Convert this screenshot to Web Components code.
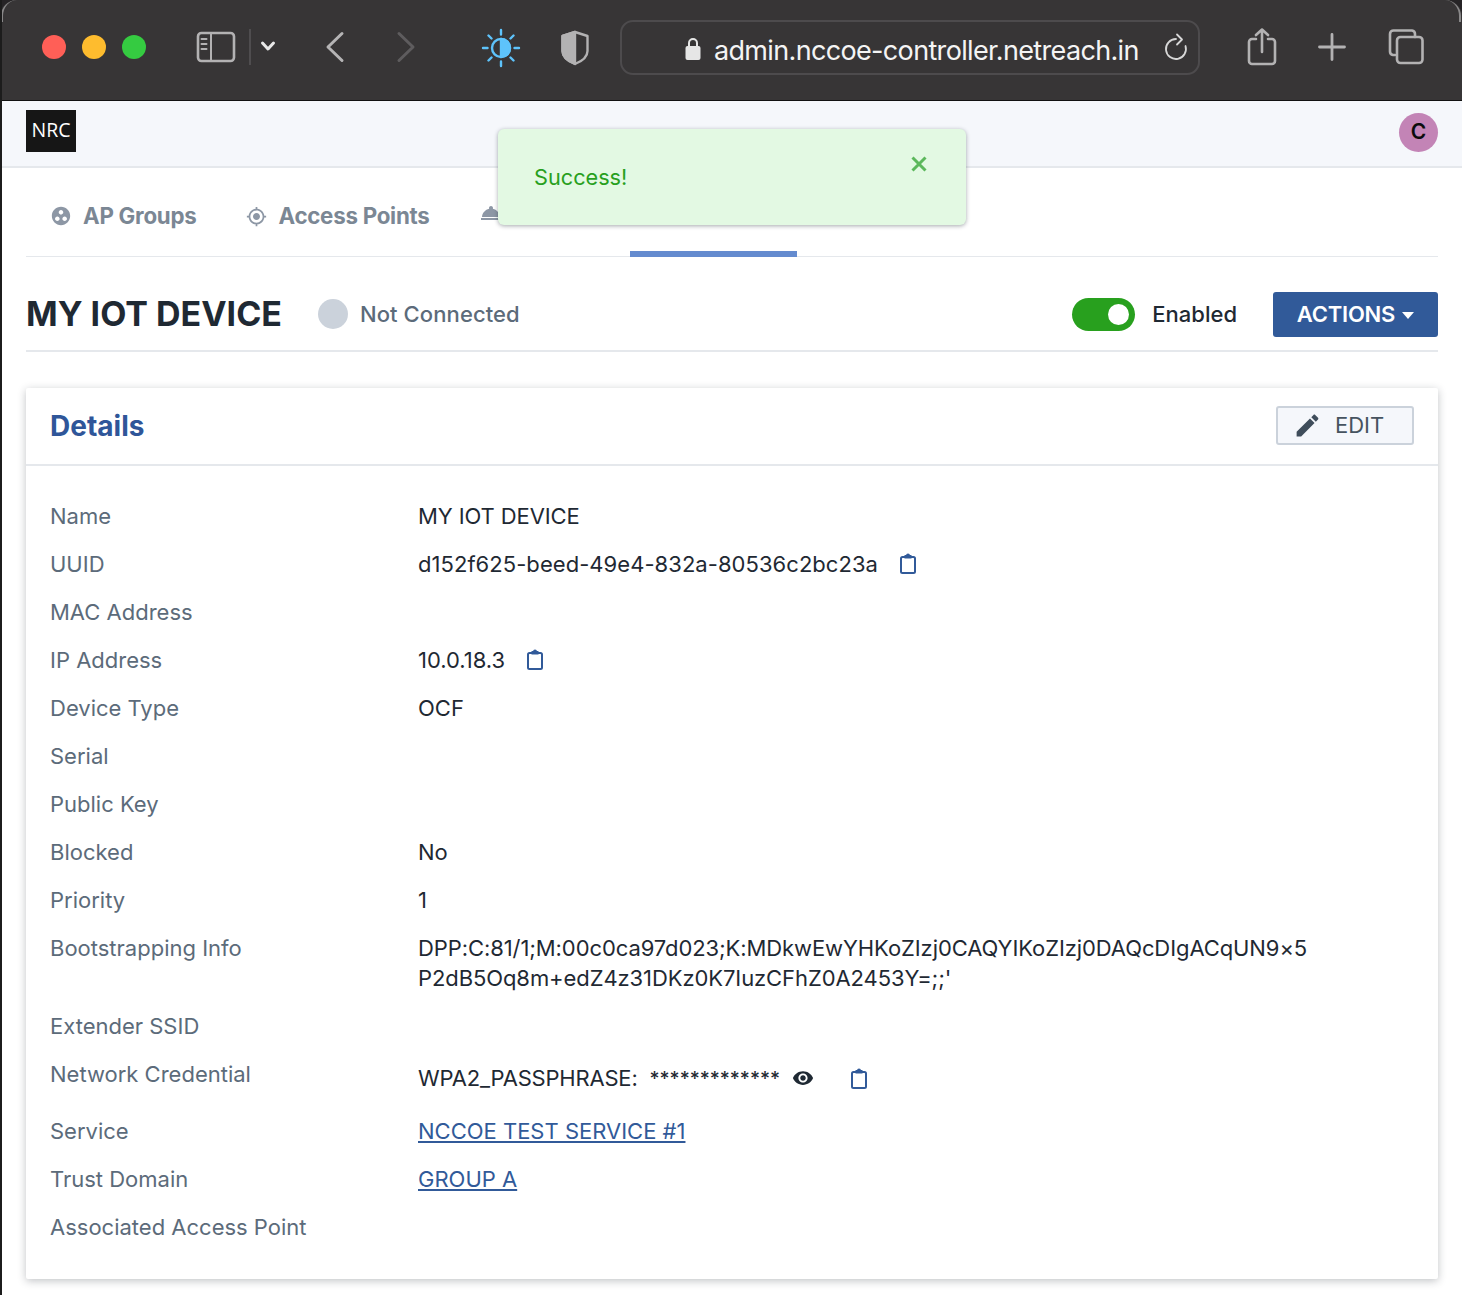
<!DOCTYPE html>
<html><head><meta charset="utf-8"><style>
html,body{margin:0;padding:0;background:#fff;height:1295px;overflow:hidden}
body{font-family:Inter,"Noto Sans",sans-serif;color:#1f2933}
</style></head><body>
<app-window>
<safari-bar></safari-bar>
<app-header></app-header>
<page-main>
<nav-tabs></nav-tabs>
<device-title name="MY IOT DEVICE"></device-title>
<details-card>
<detail-row label="Name"><span style="letter-spacing:-.1px">MY IOT DEVICE</span></detail-row>
<detail-row label="UUID"><span style="letter-spacing:.05px">d152f625-beed-49e4-832a-80536c2bc23a</span><copy-icon style="margin-left:21px"></copy-icon></detail-row>
<detail-row label="MAC Address"></detail-row>
<detail-row label="IP Address"><span>10.0.18.3</span><copy-icon style="margin-left:21px"></copy-icon></detail-row>
<detail-row label="Device Type">OCF</detail-row>
<detail-row label="Serial"></detail-row>
<detail-row label="Public Key"></detail-row>
<detail-row label="Blocked">No</detail-row>
<detail-row label="Priority">1</detail-row>
<detail-row label="Bootstrapping Info"><span style="letter-spacing:-.09px">DPP:C:81/1;M:00c0ca97d023;K:MDkwEwYHKoZIzj0CAQYIKoZIzj0DAQcDIgACqUN9×5<br>P2dB5Oq8m+edZ4z31DKz0K7IuzCFhZ0A2453Y=;;'</span></detail-row>
<detail-row label="Extender SSID"></detail-row>
<detail-row label="Network Credential" tall><span style="letter-spacing:-.2px">WPA2_PASSPHRASE:</span><span style="margin-left:12px;font-size:19.300px;font-weight:500">*************</span><eye-icon></eye-icon><copy-icon style="margin-left:36px"></copy-icon></detail-row>
<detail-row label="Service"><a href="#" style="color:#315a99">NCCOE TEST SERVICE #1</a></detail-row>
<detail-row label="Trust Domain"><a href="#" style="color:#315a99">GROUP A</a></detail-row>
<detail-row label="Associated Access Point"></detail-row>
</details-card>
</page-main>
<toast-alert>Success!</toast-alert>
</app-window>
<script>
function def(name,html){
  customElements.define(name,class extends HTMLElement{
    connectedCallback(){
      if(this.shadowRoot)return;
      const s=this.attachShadow({mode:'open'});
      s.innerHTML=typeof html==='function'?html(this):html;
    }
  });
}
def('app-window',`<style>:host{display:block;position:relative;height:1295px;box-sizing:border-box;border-left:2px solid #1c1c1c;overflow:hidden}</style><slot></slot>`);

def('safari-bar',`<style>
:host{display:block;height:101px;margin-left:-2px;background:#262426;position:relative}
.in{display:flex;align-items:center;height:100px;background:#373536;border-bottom:1px solid #111;border-radius:16px 16px 0 0;padding-left:42px}
.rl,.rr{position:absolute;top:0;width:16px;height:22px;box-sizing:border-box}
.rl{left:1px;border-left:2px solid #8a898a;border-top-left-radius:16px}
.rr{right:1px;border-right:2px solid #8a898a;border-top-right-radius:16px}
svg{display:block;flex:none;fill:none;stroke-linecap:round;stroke-linejoin:round}
.d{width:24px;height:24px;border-radius:50%;flex:none;margin-top:-6px}
.url{flex:none;box-sizing:border-box;width:580px;height:55px;margin:-6px 0 0 31px;border:2px solid #4d4b4d;border-radius:13px;display:flex;align-items:center;padding-left:63px;color:#f4f4f4;font:400 27px/1 Inter,sans-serif;white-space:nowrap}
.u{margin-left:13px;letter-spacing:-.66px;margin-top:6px}
</style>
<div class="in">
<div class="d" style="background:#ff5f57"></div>
<div class="d" style="background:#febc2e;margin-left:16px"></div>
<div class="d" style="background:#35cb41;margin-left:16px"></div>
<svg style="margin:-6px 0 0 50px" width="40" height="32" viewBox="0 0 40 32" stroke="#b3b2b3" stroke-width="2.6"><rect x="2" y="2" width="36" height="28" rx="3.5"/><path d="M15 2v28M5.5 8h5M5.5 13h5M5.5 18h5" stroke-width="2"/></svg>
<svg style="margin:-6px 0 0 13px" width="2" height="36" viewBox="0 0 2 36"><rect width="2" height="36" fill="#4f4d4f"/></svg>
<svg style="margin:-8px 0 0 9px" width="16" height="12" viewBox="0 0 16 12" stroke="#e8e8e8" stroke-width="3"><path d="M2.5 3 8 9l5.5-6"/></svg>
<svg style="margin:-6px 0 0 49px" width="20" height="32" viewBox="0 0 20 32" stroke="#b5b4b5" stroke-width="3"><path d="M17 2.5 3 16l14 13.5"/></svg>
<svg style="margin:-6px 0 0 51px" width="20" height="32" viewBox="0 0 20 32" stroke="#5e5c5e" stroke-width="3"><path d="M3 2.5 17 16 3 29.5"/></svg>
<svg style="margin:-4px 0 0 65px" width="40" height="40" viewBox="0 0 40 40" stroke="#5ec3fb" stroke-width="2.4"><circle cx="20" cy="20" r="9"/><path d="M20 11a9 9 0 0 1 0 18z" fill="#5ec3fb"/><path d="M20 2v4.500M20 33.500V38M2 20h4.500M33.500 20H38M7.500 7.500l3 3M29.500 29.500l3 3M7.500 32.500l3-3M29.500 10.500l3-3"/></svg>
<svg style="margin:-4px 0 0 40px" width="28" height="36" viewBox="0 0 28 36" stroke="#b3b2b3" stroke-width="2.400"><path d="M14 2 26.500 6v15c0 6-5 10-12.500 13C6.500 31 1.500 27 1.500 21V6z"/><path d="M14 2 1.500 6v15c0 6 5 10 12.500 13z" fill="#b3b2b3"/></svg>
<div class="url">
<svg width="16" height="23" viewBox="0 0 16 23" style="margin-top:3px"><rect x="0.500" y="9" width="15" height="14" rx="2" fill="#e6e6e6"/><path d="M4 10V6a4 4 0 0 1 8 0v4" stroke="#e6e6e6" stroke-width="2"/></svg>
<span class="u">admin.nccoe-controller.netreach.in</span>
<svg style="margin:-1px 0 0 25px" width="24" height="30" viewBox="0 0 24 30" stroke="#d8d8d8" stroke-width="1.800"><path d="M12 7A10 10 0 1 0 21.500 14"/><path d="M13 2.500 18 7.500 13 12.500"/></svg>
</div>
<svg style="margin:-6px 0 0 47px" width="30" height="38" viewBox="0 0 30 38" stroke="#b3b2b3" stroke-width="2.600"><path d="M9 11H5a3 3 0 0 0-3 3v19a3 3 0 0 0 3 3h20a3 3 0 0 0 3-3V14a3 3 0 0 0-3-3h-4M15 24V1.500M9 7l6-5.500L21 7"/></svg>
<svg style="margin:-6px 0 0 41px" width="28" height="28" viewBox="0 0 28 28" stroke="#b3b2b3" stroke-width="2.800"><path d="M14 1.500v25M1.500 14h25"/></svg>
<svg style="margin:-6px 0 0 42px" width="36" height="36" viewBox="0 0 36 36" stroke="#b3b2b3" stroke-width="2.600"><path d="M7 26H5a3.500 3.500 0 0 1-3-3.500V5a3.500 3.500 0 0 1 3.500-3.500H24A3.500 3.500 0 0 1 27 5v3"/><rect x="9" y="8" width="25.500" height="26" rx="3.500"/></svg>
</div><div class="rl"></div><div class="rr"></div>
`);

def('app-header',`<style>
:host{display:flex;justify-content:space-between;background:#f5f7fb;border-bottom:2px solid #e5e8ec;padding:9px 24px 0 24px;height:56px}
.l{width:50px;height:42px;background:#161616;color:#fff;font:400 19.500px/40px "Open Sans",sans-serif;text-align:center}
.a{width:39px;height:39px;border-radius:50%;background:#c384b6;margin-top:3px;color:#0c0c0c;font:600 21px/38px Inter,sans-serif;text-align:center}
</style><div class="l">NRC</div><div class="a">C</div>`);

def('page-main',`<style>:host{display:block;padding:0 24px}</style><slot></slot>`);

const GW="M12 2C6.480 2 2 6.480 2 12s4.480 10 10 10 10-4.480 10-10S17.520 2 12 2zM8 17.500c-1.380 0-2.500-1.120-2.500-2.500s1.120-2.500 2.500-2.500 2.500 1.120 2.500 2.500-1.120 2.500-2.500 2.500zM9.500 8c0-1.380 1.120-2.500 2.500-2.500s2.500 1.120 2.500 2.500-1.120 2.500-2.500 2.500S9.500 9.380 9.500 8zm6.500 9.500c-1.380 0-2.500-1.120-2.500-2.500s1.120-2.500 2.500-2.500 2.500 1.120 2.500 2.500-1.120 2.500-2.500 2.500z";
const GPS="M12 8c-2.210 0-4 1.790-4 4s1.790 4 4 4 4-1.790 4-4-1.790-4-4-4zm8.940 3c-.46-4.170-3.770-7.480-7.940-7.940V1h-2v2.060C6.830 3.520 3.520 6.830 3.060 11H1v2h2.060c.46 4.170 3.770 7.480 7.940 7.940V23h2v-2.060c4.170-.46 7.480-3.770 7.940-7.940H23v-2h-2.060zM12 19c-3.870 0-7-3.130-7-7s3.130-7 7-7 7 3.130 7 7-3.130 7-7 7z";
const RS="M2 17h20v2H2zm11.840-9.210c.1-.24.16-.51.16-.79 0-1.100-.9-2-2-2s-2 .9-2 2c0 .28.06.55.16.79C6.250 8.600 3.270 11.930 3 16h18c-.27-4.070-3.250-7.400-7.160-8.210z";
def('nav-tabs',`<style>
:host{display:flex;height:88px;border-bottom:1px solid #e5e8ec;padding-left:24px;box-sizing:content-box;align-items:flex-start}
.t{display:flex;align-items:center;color:#7b8794;font:700 22.300px/30px Inter,sans-serif;letter-spacing:-.25px;margin-top:33px;white-space:nowrap}
svg{display:block;fill:#8d97a5;flex:none}
.ind{width:167px;height:6px;background:#648bcf;align-self:flex-end;margin-left:127px;margin-bottom:-1px}
</style>
<div class="t"><svg width="22" height="22" viewBox="0 0 24 24" style="margin-right:11px"><path d="${GW}"/></svg>AP Groups</div>
<div class="t" style="margin-left:49px"><svg width="21" height="21" viewBox="0 0 24 24" style="margin-right:12px"><path d="${GPS}"/></svg>Access Points</div>
<div class="t" style="margin-left:49px"><svg width="24" height="24" viewBox="0 0 24 24"><path d="${RS}"/></svg></div>
<div class="ind"></div>`);

def('device-title',h=>`<style>
:host{display:flex;align-items:center;height:73px;padding-top:20px;border-bottom:2px solid #e5e8ec;box-sizing:content-box}
h1{margin:0;font:700 34px/40px Inter,sans-serif;color:#1f2933;white-space:nowrap}
.c{width:30px;height:30px;border-radius:50%;background:#cbd2db;margin:1px 0 0 36px}
.s{margin-left:12px;color:#5c6b7a;font-size:22px;letter-spacing:.1px;font-weight:500}
.sp{flex:1}
.tg{width:63px;height:33px;border-radius:17px;background:#28a01e;position:relative;margin-top:1px}
.tg b{position:absolute;right:6px;top:6px;width:21px;height:21px;border-radius:50%;background:#fff}
.e{margin-left:17px;font-size:22px;font-weight:500;color:#1f2933}
.b{margin:1px 0 0 36px;width:165px;height:45px;border-radius:3px;background:#315a99;color:#fff;font:600 22px/45px Inter,sans-serif;display:flex;align-items:center;justify-content:center;letter-spacing:-.2px}
.b i{display:block;width:0;height:0;border:6.500px solid transparent;border-top:7px solid #fff;border-bottom:0;margin-left:7px;margin-top:3px}
</style><h1>${h.getAttribute('name')}</h1><div class="c"></div><span class="s">Not Connected</span><div class="sp"></div>
<div class="tg"><b></b></div><span class="e">Enabled</span><div class="b">ACTIONS<i></i></div>`);

def('details-card',`<style>
:host{display:block;margin-top:36px;height:891px;background:#fff;box-shadow:0 2px 8px rgba(31,41,51,.28);border-radius:2px;box-sizing:border-box}
header{display:flex;justify-content:space-between;align-items:center;height:78px;box-sizing:border-box;padding:0 24px;border-bottom:2px solid #e5e8ec}
h2{margin:0;font:700 28px/36px Inter,sans-serif;color:#2f5699}
.ed{margin-top:-2px;width:138px;height:39px;box-sizing:border-box;background:#f5f7fb;border:2px solid #cbd2db;border-radius:3px;display:flex;align-items:center;padding-left:15px;color:#46535f;font:400 22px/1 Inter,sans-serif}
.ed svg{display:block;fill:#3f4d5b;margin-right:13px;flex:none}
.b{padding-top:35px}
</style>
<header><h2>Details</h2><div class="ed"><svg width="29" height="29" viewBox="0 0 24 24"><path d="M3 17.250V21h3.750L17.810 9.940l-3.750-3.750L3 17.250zM20.710 7.040c.39-.39.39-1.020 0-1.410l-2.340-2.340c-.39-.39-1.020-.39-1.410 0l-1.830 1.830 3.750 3.750 1.830-1.830z"/></svg>EDIT</div></header>
<div class="b"><slot></slot></div>`);

def('detail-row',h=>`<style>
:host{display:flex;padding:0 24px 18px;font-size:22px;line-height:30px}
:host([tall]){padding-bottom:23px}
.k{width:368px;flex:none;color:#5c6b7a}
.v{color:#1f2933;display:block;min-height:30px}
:host([tall]) .v{margin-top:4px;display:flex;align-items:center;height:30px}
</style><div class="k">${h.getAttribute('label')}</div><div class="v"><slot></slot></div>`);

def('copy-icon',`<style>:host{display:inline-block;vertical-align:-2px;width:18px;height:21px}svg{display:block;fill:none;stroke:#315a99;stroke-width:2}</style>
<svg width="18" height="21" viewBox="0 0 18 21"><rect x="2" y="4" width="14" height="16" rx="1.500"/><path d="M5.500 2h7v3.500h-7z" fill="#315a99" stroke="none"/><circle cx="9" cy="2.500" r="2" fill="#315a99" stroke="none"/></svg>`);

def('eye-icon',`<style>:host{display:inline-block;width:22px;height:22px;margin-left:12px}svg{display:block;fill:#1f2933}</style>
<svg width="22" height="22" viewBox="0 0 24 24"><path d="M12 4.500C7 4.500 2.730 7.610 1 12c1.730 4.390 6 7.500 11 7.500s9.270-3.110 11-7.500c-1.730-4.390-6-7.500-11-7.500zM12 17c-2.760 0-5-2.240-5-5s2.240-5 5-5 5 2.240 5 5-2.240 5-5 5zm0-8c-1.660 0-3 1.340-3 3s1.340 3 3 3 3-1.340 3-3-1.340-3-3-3z"/></svg>`);

def('toast-alert',`<style>
:host{position:absolute;left:496px;top:129px;width:468px;height:96px;box-sizing:border-box;background:#e3f9e3;border-radius:6px;box-shadow:0 1px 4px rgba(31,41,51,.4);color:#28a01e;font:400 21.700px/30px Inter,sans-serif;padding:33px 36px}
svg{position:absolute;right:39px;top:27px;stroke:#5cb85c;stroke-width:3;fill:none}
</style><slot></slot><svg width="16" height="16" viewBox="0 0 16 16"><path d="M1.500 1.500l13 13M14.500 1.500l-13 13"/></svg>`);
</script>
</body></html>
